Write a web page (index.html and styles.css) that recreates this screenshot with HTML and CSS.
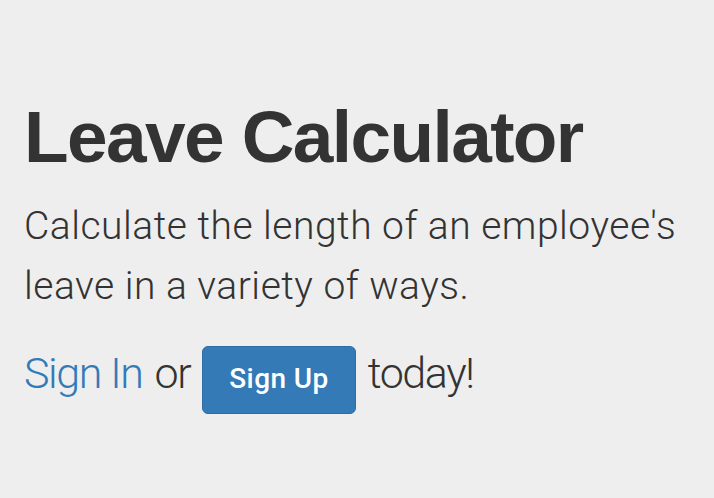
FILE: index.html
```html
<!DOCTYPE html>
<html>
<head>
<meta charset="utf-8">
<link rel="stylesheet" href="styles.css">
</head>
<body>
<div class="jumbotron">
  <h1 class="title">Leave Calculator</h1>
  <p class="lead">Calculate the length of an employee's leave in a variety of ways.</p>
  <div class="cta">
    <a class="link" href="#">Sign In</a>
    <span class="word">or</span>
    <a class="btn" href="#">Sign Up</a>
    <span class="word">today!</span>
  </div>
</div>
</body>
</html>
```
FILE: styles.css
```css
html, body {
  margin: 0;
  padding: 0;
  background: #eeeeee;
  color: #333333;
}
body {
  width: 714px;
  height: 498px;
  overflow: hidden;
}
.jumbotron {
  padding: 97px 24px 0 24px;
  display: flex;
  flex-direction: column;
}
.title {
  margin: 0;
  font-family: "Liberation Sans", Arial, sans-serif;
  font-weight: 700;
  font-size: 73px;
  line-height: 80px;
  letter-spacing: -1.6px;
  color: #333333;
}
.lead {
  margin: 19px 0 0 0;
  font-family: Roboto, "Liberation Sans", sans-serif;
  font-weight: 300;
  font-size: 39px;
  line-height: 60px;
  letter-spacing: 0.5px;
  width: 680px;
}
.cta {
  margin-top: 24px;
  display: flex;
  align-items: baseline;
  font-family: Roboto, "Liberation Sans", sans-serif;
  font-weight: 300;
  font-size: 43px;
  line-height: 67px;
  letter-spacing: -1.4px;
  gap: 12px;
}
.link {
  color: #337ab7;
  text-decoration: none;
}
.btn {
  display: inline-block;
  font-family: Roboto, "Liberation Sans", Arial, sans-serif;
  font-weight: 500;
  font-size: 28px;
  line-height: 27px;
  letter-spacing: 0.4px;
  padding: 18px 26px 21px 26px;
  color: #ffffff;
  background: #337ab7;
  border: 1px solid #2e6da4;
  border-radius: 6px;
  text-decoration: none;
}
```
